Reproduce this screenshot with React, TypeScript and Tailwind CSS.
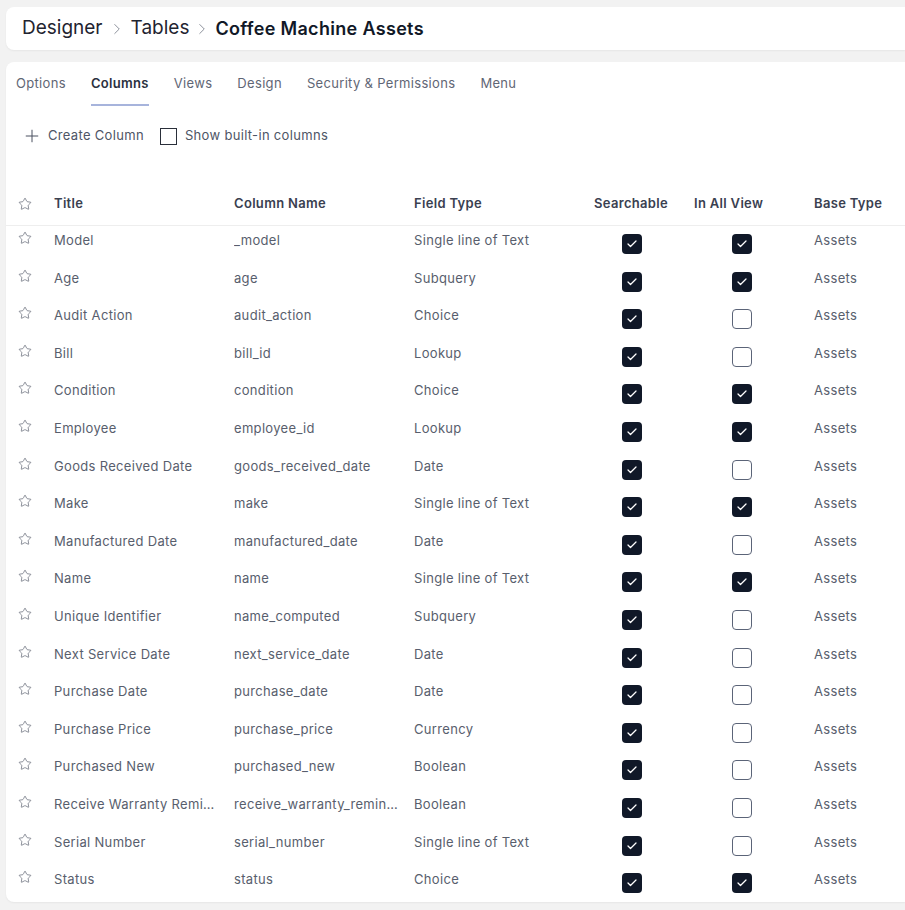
import { Plus, ChevronRight, Star, Check } from 'lucide-react'

type Row = { title: string; name: string; type: string; search: boolean; all: boolean }

const ROWS: Row[] = [
  { title: 'Model', name: '_model', type: 'Single line of Text', search: true, all: true },
  { title: 'Age', name: 'age', type: 'Subquery', search: true, all: true },
  { title: 'Audit Action', name: 'audit_action', type: 'Choice', search: true, all: false },
  { title: 'Bill', name: 'bill_id', type: 'Lookup', search: true, all: false },
  { title: 'Condition', name: 'condition', type: 'Choice', search: true, all: true },
  { title: 'Employee', name: 'employee_id', type: 'Lookup', search: true, all: true },
  { title: 'Goods Received Date', name: 'goods_received_date', type: 'Date', search: true, all: false },
  { title: 'Make', name: 'make', type: 'Single line of Text', search: true, all: true },
  { title: 'Manufactured Date', name: 'manufactured_date', type: 'Date', search: true, all: false },
  { title: 'Name', name: 'name', type: 'Single line of Text', search: true, all: true },
  { title: 'Unique Identifier', name: 'name_computed', type: 'Subquery', search: true, all: false },
  { title: 'Next Service Date', name: 'next_service_date', type: 'Date', search: true, all: false },
  { title: 'Purchase Date', name: 'purchase_date', type: 'Date', search: true, all: false },
  { title: 'Purchase Price', name: 'purchase_price', type: 'Currency', search: true, all: false },
  { title: 'Purchased New', name: 'purchased_new', type: 'Boolean', search: true, all: false },
  { title: 'Receive Warranty Reminder', name: 'receive_warranty_reminder', type: 'Boolean', search: true, all: false },
  { title: 'Serial Number', name: 'serial_number', type: 'Single line of Text', search: true, all: false },
  { title: 'Status', name: 'status', type: 'Choice', search: true, all: true },
]

const TABS = ['Options', 'Columns', 'Views', 'Design', 'Security & Permissions', 'Menu']

function Box({ on }: { on: boolean }) {
  return on ? (
    <div className="w-5 h-5 rounded-[4px] bg-[#101828] flex items-center justify-center">
      <Check size={12} strokeWidth={2.5} className="text-white" />
    </div>
  ) : (
    <div className="w-5 h-5 rounded-[4px] border border-[#5b6478] bg-white" />
  )
}

export default function App() {
  return (
    <div className="min-h-[910px] bg-[#f2f2f2] pl-[6px] pt-[7px] font-['Inter',sans-serif] tracking-[0.02em] overflow-hidden">
      {/* breadcrumb */}
      <div className="h-[43px] bg-white rounded-l-lg flex items-center pl-4 shadow-[0_1px_2px_rgba(0,0,0,0.05)]">
        <span className="text-[19px] text-[#1f2430] tracking-normal">Designer</span>
        <ChevronRight size={18} strokeWidth={1.3} className="mx-[5px] text-[#8a8f99]" />
        <span className="text-[19px] text-[#1f2430] tracking-normal">Tables</span>
        <ChevronRight size={18} strokeWidth={1.3} className="mx-[4px] text-[#8a8f99]" />
        <span className="text-[18px] font-semibold text-[#111827]">Coffee Machine Assets</span>
      </div>

      <div className="mt-3 bg-white rounded-l-lg h-[840px] shadow-[0_1px_2px_rgba(0,0,0,0.05)]">
        {/* tabs */}
        <div className="flex items-end gap-[25px] pl-[10px] h-[44px]">
          {TABS.map((t) => (
            <div
              key={t}
              className={
                t === 'Columns'
                  ? 'pb-[11px] border-b-2 border-[#a7b4dc] text-[13px] font-semibold text-[#2b3140]'
                  : 'pb-[11px] border-b-2 border-transparent text-[13px] text-[#5f6675]'
              }
            >
              {t}
            </div>
          ))}
        </div>

        {/* toolbar */}
        <div className="flex items-center h-[34px] mt-[13px] pl-4 text-[13px] text-[#4e5566]">
          <Plus size={20} strokeWidth={1.2} className="text-[#4b5060]" />
          <span className="ml-[6px]">Create Column</span>
          <div className="ml-4 w-[17px] h-[17px] border border-[#2a2f3a]" />
          <span className="ml-2">Show built-in columns</span>
        </div>

        {/* table */}
        <div className="mt-[29px] text-[13px]">
          <div className="grid grid-cols-[48px_180px_180px_180px_100px_120px_1fr] h-[44px] items-center border-b border-[#eeeeee] font-semibold text-[#3a4050]">
            <div className="pl-3"><Star size={14} strokeWidth={1.2} className="text-[#5b6170]" /></div>
            <div>Title</div>
            <div>Column Name</div>
            <div>Field Type</div>
            <div>Searchable</div>
            <div>In All View</div>
            <div>Base Type</div>
          </div>
          {ROWS.map((r) => (
            <div key={r.name} className="grid grid-cols-[48px_180px_180px_180px_100px_120px_1fr] h-[37.6px] items-start pt-[5px] text-[#585e6d]">
              <div className="pl-3"><Star size={14} strokeWidth={1.2} className="text-[#5b6170]" /></div>
              <div className="truncate pr-4">{r.title}</div>
              <div className="truncate pr-4">{r.name}</div>
              <div>{r.type}</div>
              <div className="pl-[28px] pt-[3px]"><Box on={r.search} /></div>
              <div className="pl-[38px] pt-[3px]"><Box on={r.all} /></div>
              <div>Assets</div>
            </div>
          ))}
        </div>
      </div>
    </div>
  )
}
